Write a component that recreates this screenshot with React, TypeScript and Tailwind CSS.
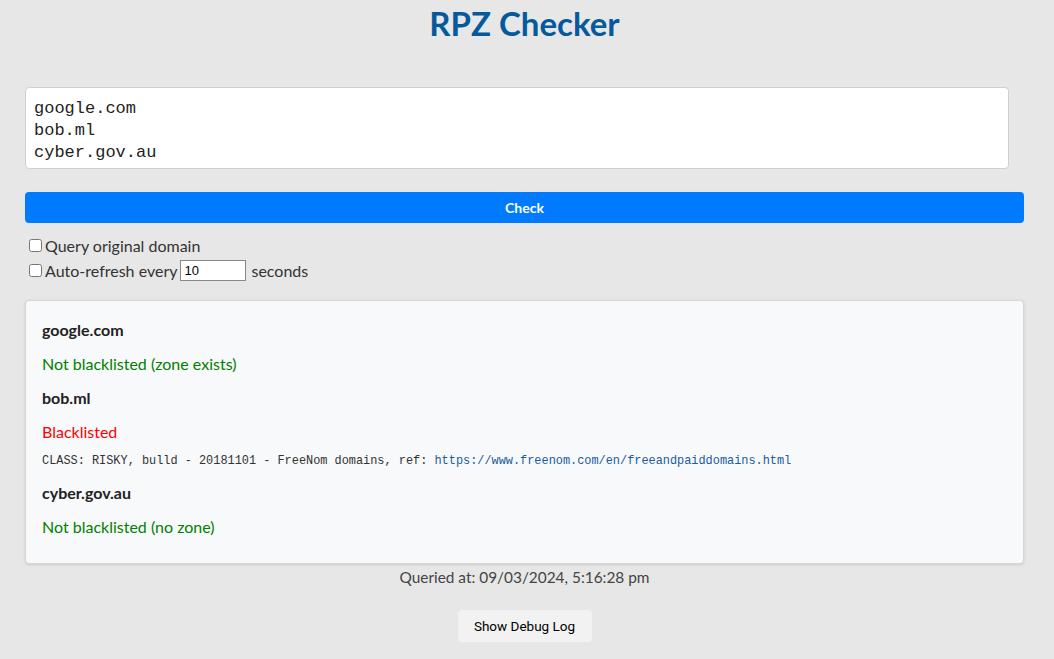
import React from 'react';

const results = [
  { domain: 'google.com', status: 'Not blacklisted (zone exists)', listed: false },
  {
    domain: 'bob.ml',
    status: 'Blacklisted',
    listed: true,
    info: 'CLASS: RISKY, bulld - 20181101 - FreeNom domains, ref: ',
    url: 'https://www.freenom.com/en/freeandpaiddomains.html',
  },
  { domain: 'cyber.gov.au', status: 'Not blacklisted (no zone)', listed: false },
];

export default function App() {
  return (
    <div className="min-h-screen w-full bg-[#e7e7e7] font-['Lato','Noto_Sans',sans-serif] text-[#333]">
      <div className="ml-[25px] w-[999px] pb-[18px]">
        <h1 className="pt-[3px] text-center text-[33px] font-bold leading-[40px] text-[#045a9c]">RPZ Checker</h1>

        <textarea
          className="mt-[44px] block h-[82px] w-[984px] resize-none rounded border border-[#cfcfcf] bg-white px-[8px] pb-[4px] pt-[10px] font-['Liberation_Mono',monospace] text-[17px] leading-[22px] text-[#222] outline-none"
          defaultValue={'google.com\nbob.ml\ncyber.gov.au'}
        />

        <button className="mt-[23px] block h-[31px] w-full rounded bg-[#007bff] text-[14px] font-bold text-white">
          Check
        </button>

        <div className="mt-[10px] flex h-[25px] items-center text-[16px]">
          <input type="checkbox" className="ml-[4px] mr-[3px] h-[13px] w-[13px]" />
          <span>Query original domain</span>
        </div>
        <div className="flex h-[25px] items-center text-[16px]">
          <input type="checkbox" className="ml-[4px] mr-[3px] h-[13px] w-[13px]" />
          <span>Auto-refresh every</span>
          <input
            type="text"
            defaultValue="10"
            className="ml-[3px] mr-[5px] h-[21px] w-[66px] border border-[#888] bg-white px-[3px] font-['Liberation_Sans',sans-serif] text-[13px] text-black outline-none"
          />
          <span>seconds</span>
        </div>

        <div className="mt-[17px] flex flex-col gap-[10px] rounded border border-[#d6d6d6] bg-[#f8f9fa] px-[16px] pb-[24px] pt-[17px] shadow-[0_1px_3px_rgba(0,0,0,0.12)]">
          {results.map((r) => (
            <React.Fragment key={r.domain}>
              <div className="h-6 text-[16px] font-bold leading-6 text-[#222]">{r.domain}</div>
              <div className={`h-6 text-[16px] leading-6 ${r.listed ? 'text-[#ff0000]' : 'text-[#008000]'}`}>
                {r.status}
              </div>
              {r.info && (
                <div className="mb-[3px] h-[14px] font-['Liberation_Mono',monospace] text-[11.9px] leading-[14px] text-[#333]">
                  {r.info}
                  <a href={r.url} className="text-[#1b5b9e]">
                    {r.url}
                  </a>
                </div>
              )}
            </React.Fragment>
          ))}
        </div>

        <div className="mt-[1px] text-center text-[15.4px] leading-6 text-[#444]">
          Queried at: 09/03/2024, 5:16:28 pm
        </div>

        <div className="mt-[21px] flex justify-center">
          <button className="h-[32px] w-[134px] rounded bg-[#f2f2f2] font-['Roboto',sans-serif] text-[13.5px] text-black">
            Show Debug Log
          </button>
        </div>
      </div>
    </div>
  );
}
